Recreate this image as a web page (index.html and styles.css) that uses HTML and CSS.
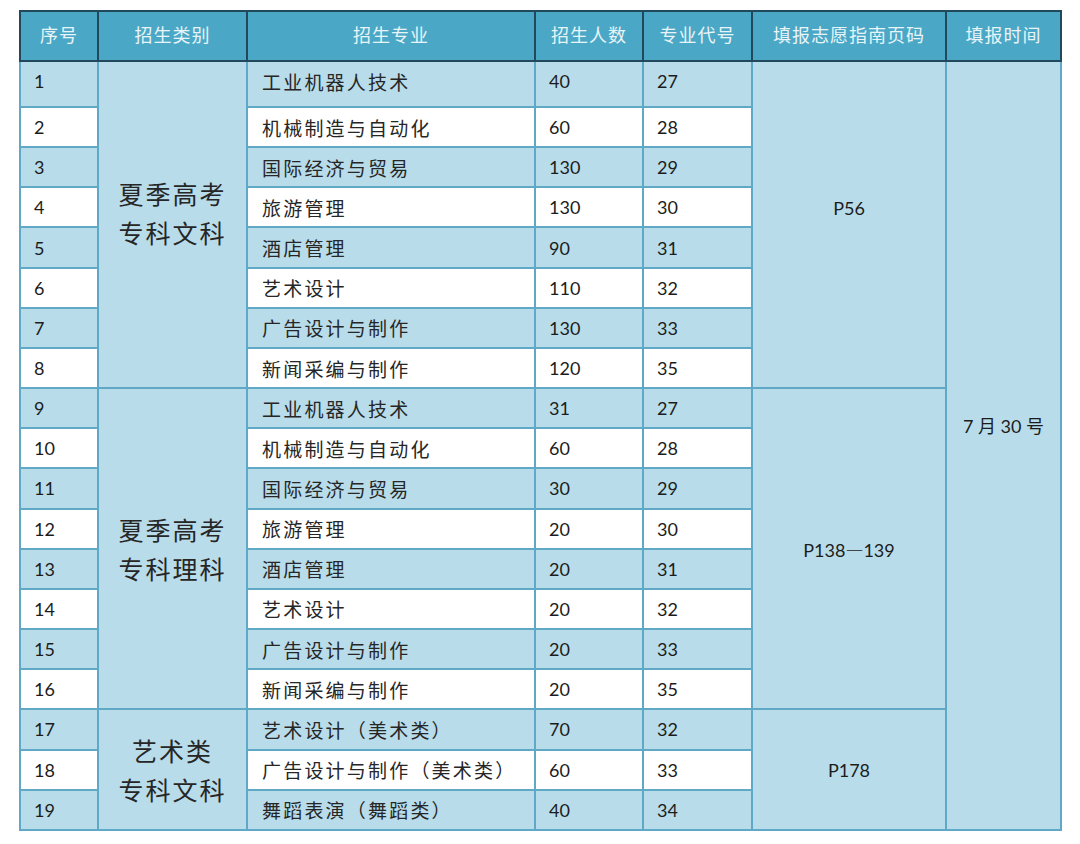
FILE: index.html
```html
<!DOCTYPE html>
<html lang="zh-CN">
<head>
<meta charset="utf-8">
<title>招生计划</title>
<link rel="stylesheet" href="styles.css">
</head>
<body>
<table class="plan">
  <colgroup>
    <col class="c-no"><col class="c-cat"><col class="c-major"><col class="c-num"><col class="c-code"><col class="c-page"><col class="c-time">
  </colgroup>
  <thead>
    <tr class="head">
      <th>序号</th><th>招生类别</th><th>招生专业</th><th>招生人数</th><th>专业代号</th><th>填报志愿指南页码</th><th>填报时间</th>
    </tr>
  </thead>
  <tbody>
    <tr class="odd first"><td>1</td><td class="merge cat cat-a" rowspan="8">夏季高考<br>专科文科</td><td class="major">工业机器人技术</td><td>40</td><td>27</td><td class="merge page page-a" rowspan="8">P56</td><td class="merge time" rowspan="19">7 月 30 号</td></tr>
    <tr class="even"><td>2</td><td class="major">机械制造与自动化</td><td>60</td><td>28</td></tr>
    <tr class="odd"><td>3</td><td class="major">国际经济与贸易</td><td>130</td><td>29</td></tr>
    <tr class="even"><td>4</td><td class="major">旅游管理</td><td>130</td><td>30</td></tr>
    <tr class="odd"><td>5</td><td class="major">酒店管理</td><td>90</td><td>31</td></tr>
    <tr class="even"><td>6</td><td class="major">艺术设计</td><td>110</td><td>32</td></tr>
    <tr class="odd"><td>7</td><td class="major">广告设计与制作</td><td>130</td><td>33</td></tr>
    <tr class="even"><td>8</td><td class="major">新闻采编与制作</td><td>120</td><td>35</td></tr>
    <tr class="odd"><td>9</td><td class="merge cat cat-b" rowspan="8">夏季高考<br>专科理科</td><td class="major">工业机器人技术</td><td>31</td><td>27</td><td class="merge page" rowspan="8">P138<span class="dash">—</span>139</td></tr>
    <tr class="even"><td>10</td><td class="major">机械制造与自动化</td><td>60</td><td>28</td></tr>
    <tr class="odd"><td>11</td><td class="major">国际经济与贸易</td><td>30</td><td>29</td></tr>
    <tr class="even"><td>12</td><td class="major">旅游管理</td><td>20</td><td>30</td></tr>
    <tr class="odd"><td>13</td><td class="major">酒店管理</td><td>20</td><td>31</td></tr>
    <tr class="even"><td>14</td><td class="major">艺术设计</td><td>20</td><td>32</td></tr>
    <tr class="odd"><td>15</td><td class="major">广告设计与制作</td><td>20</td><td>33</td></tr>
    <tr class="even"><td>16</td><td class="major">新闻采编与制作</td><td>20</td><td>35</td></tr>
    <tr class="odd"><td>17</td><td class="merge cat" rowspan="3">艺术类<br>专科文科</td><td class="major">艺术设计（美术类）</td><td>70</td><td>32</td><td class="merge page" rowspan="3">P178</td></tr>
    <tr class="even"><td>18</td><td class="major">广告设计与制作（美术类）</td><td>60</td><td>33</td></tr>
    <tr class="odd"><td>19</td><td class="major">舞蹈表演（舞蹈类）</td><td>40</td><td>34</td></tr>
  </tbody>
</table>
</body>
</html>
```
FILE: styles.css
```css
html, body {
  margin: 0;
  padding: 0;
  background: #ffffff;
}
body {
  padding: 10px 0 0 19px;
  font-family: "Lato", "Noto Sans CJK SC", sans-serif;
  color: #1c1c1c;
}
.plan {
  border-collapse: collapse;
  table-layout: fixed;
  width: 1043px;
}
.c-no { width: 78px; }
.c-cat { width: 149px; }
.c-major { width: 288px; }
.c-num { width: 108px; }
.c-code { width: 109px; }
.c-page { width: 194px; }
.c-time { width: 115px; }

.head { height: 50px; }
.head th {
  background: #4aa8c6;
  color: #e9f4f8;
  font-family: "Noto Sans CJK SC", sans-serif;
  font-weight: 400;
  font-size: 18px;
  letter-spacing: 1px;
  text-align: center;
  vertical-align: middle;
  border: 2px solid #22485b;
  padding: 0 0 4px 0;
}
tbody tr { height: 40.17px; }
tbody tr.first { height: 46px; }
tbody td {
  border: 2px solid #5fa9c6;
  padding: 0 0 0 13px;
  font-size: 18px;
  vertical-align: middle;
  white-space: nowrap;
  text-align: left;
  font-family: "Lato", "Noto Sans CJK SC", sans-serif;
}
tbody tr.first td { padding-bottom: 6px; }
tr.odd td { background: #b8dcea; }
tr.even td { background: #ffffff; }
tbody td.major {
  font-family: "Noto Sans CJK SC", sans-serif;
  font-size: 19px;
  letter-spacing: 2.2px;
  color: #262626;
  padding-left: 14px;
}
tr td.merge {
  background: #b8dcea;
  text-align: center;
  padding: 0;
}
td.cat {
  font-family: "Noto Sans CJK SC", sans-serif;
  font-size: 25px;
  line-height: 39px;
  letter-spacing: 2px;
  color: #262626;
}
tbody tr.first td.cat-a { padding-bottom: 24px; }
td.cat-b { padding-bottom: 16px; }
td.page { font-size: 18px; }
.dash {
  font-family: "Noto Sans CJK SC", sans-serif;
}
tbody tr.first td.page-a { padding-bottom: 34px; }
tbody tr.first td.time { padding-bottom: 40px; }
```
